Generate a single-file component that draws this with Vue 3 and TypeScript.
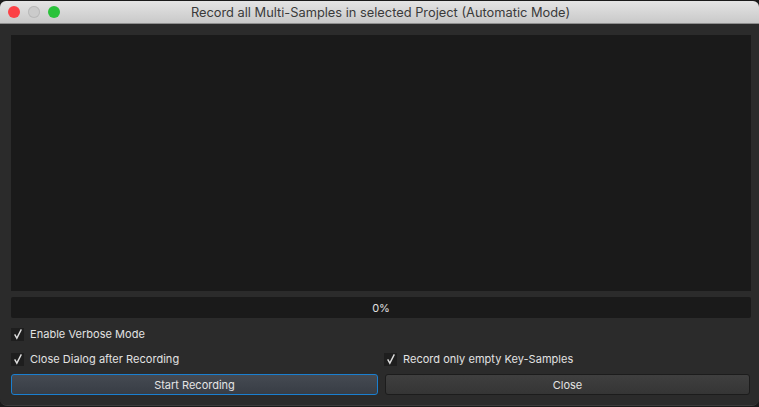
<template>
  <div class="desktop">
    <div class="window">
      <div class="titlebar">
        <div class="lights">
          <span class="light red"></span>
          <span class="light grey"></span>
          <span class="light green"></span>
        </div>
        <div class="title">Record all Multi-Samples in selected Project (Automatic Mode)</div>
      </div>
      <div class="content">
        <div class="log"></div>
        <div class="progress">{{ progress }}%</div>
        <label class="check single">
          <span class="box"><svg viewBox="0 0 12 14" width="10" height="12"><path d="M2 7.5 L4.6 12 L10 1.5" fill="none" stroke="#dcdcdc" stroke-width="1.7" /></svg></span>
          <span>Enable Verbose Mode</span>
        </label>
        <div class="columns">
          <label v-for="opt in options" :key="opt" class="check">
            <span class="box"><svg viewBox="0 0 12 14" width="10" height="12"><path d="M2 7.5 L4.6 12 L10 1.5" fill="none" stroke="#dcdcdc" stroke-width="1.7" /></svg></span>
            <span>{{ opt }}</span>
          </label>
        </div>
        <div class="columns buttons">
          <button class="btn primary">Start Recording</button>
          <button class="btn">Close</button>
        </div>
      </div>
    </div>
  </div>
</template>

<script setup lang="ts">
const progress = 0;
const options: string[] = ['Close Dialog after Recording', 'Record only empty Key-Samples'];
</script>

<style>
html, body {
  margin: 0;
  background: #1a1a1a;
}
</style>

<style scoped>
.desktop {
  width: 759px;
  height: 407px;
  overflow: hidden;
  padding-top: 1px;
  box-sizing: border-box;
  font-family: "Inter", "Liberation Sans", sans-serif;
}
.window {
  height: 404px;
  border-radius: 6px 6px 7px 7px;
  overflow: hidden;
  background: #2b2b2b;
  display: flex;
  flex-direction: column;
  border-bottom: 1px solid #3c3c3c;
}
.titlebar {
  height: 22px;
  flex: none;
  padding-left: 2px;
  background: linear-gradient(#e4e4e4, #c9c9c9);
  border-bottom: 1px solid #8e8e8e;
  display: flex;
  align-items: center;
  justify-content: center;
  position: relative;
}
.lights {
  position: absolute;
  left: 8px;
  top: 5px;
  display: flex;
  gap: 8px;
}
.light {
  width: 12px;
  height: 12px;
  border-radius: 50%;
}
.red { background: #fc4146; }
.grey { background: #cbcbcb; box-shadow: inset 0 0 0 1px #b9b9b9; }
.green { background: #29c23a; }
.title {
  font-size: 12.84px;
  color: #3a3a3a;
}
.content {
  flex: 1;
  display: flex;
  flex-direction: column;
  padding: 11px 8px 0 11px;
  background: #2b2b2b;
}
.log {
  height: 256px;
  background: #1a1a1a;
}
.progress {
  margin-top: 6px;
  height: 21px;
  line-height: 22px;
  border-radius: 2px;
  background: #1a1a1a;
  color: #e0e0e0;
  font-size: 11px;
  text-align: center;
}
.check {
  display: flex;
  align-items: center;
  gap: 6px;
  height: 16px;
  font-size: 11px;
  letter-spacing: 0.03px;
  color: #e2e2e2;
}
.single {
  margin-top: 8px;
}
.box {
  width: 13px;
  height: 13px;
  background: #1e1e1e;
  display: flex;
  align-items: center;
  justify-content: center;
  flex: none;
}
.columns {
  display: grid;
  grid-template-columns: 367px 365px;
  column-gap: 7px;
  margin-top: 9px;
}
.columns .check:last-child {
  margin-left: -1px;
}
.buttons {
  margin-top: 7px;
}
.btn {
  height: 21px;
  padding: 0;
  font: inherit;
  font-size: 11px;
  color: #e4e4e4;
  border-radius: 3px;
  border: 1px solid #1c1c1c;
  background: linear-gradient(#3f3f3f, #353535);
}
.primary {
  border: 1px solid #1a7fd0;
  background: linear-gradient(#454a52, #383d45);
}
</style>
